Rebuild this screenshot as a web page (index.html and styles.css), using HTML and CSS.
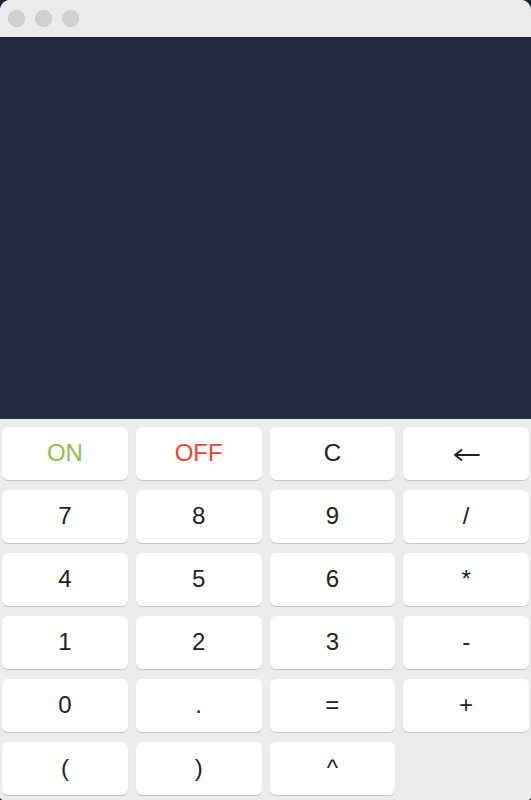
FILE: index.html
```html
<!DOCTYPE html>
<html>
<head>
<meta charset="utf-8">
<link rel="stylesheet" href="styles.css">
</head>
<body>
<div class="window">
  <div class="titlebar">
    <span class="light"></span>
    <span class="light"></span>
    <span class="light"></span>
  </div>
  <div class="display"></div>
  <div class="keypad">
    <button class="key on">ON</button>
    <button class="key off">OFF</button>
    <button class="key">C</button>
    <button class="key" aria-label="←"><svg class="arrow" width="27" height="14" viewBox="0 0 27 14"><path d="M2 7 H26 M2 7 L8.5 2 M2 7 L8.5 12" fill="none" stroke="#222" stroke-width="1.8" stroke-linecap="round" stroke-linejoin="round"/></svg></button>
    <button class="key">7</button>
    <button class="key">8</button>
    <button class="key">9</button>
    <button class="key">/</button>
    <button class="key">4</button>
    <button class="key">5</button>
    <button class="key">6</button>
    <button class="key">*</button>
    <button class="key">1</button>
    <button class="key">2</button>
    <button class="key">3</button>
    <button class="key">-</button>
    <button class="key">0</button>
    <button class="key">.</button>
    <button class="key">=</button>
    <button class="key">+</button>
    <button class="key">(</button>
    <button class="key">)</button>
    <button class="key">^</button>
  </div>
</div>
</body>
</html>
```
FILE: styles.css
```css
html, body {
  margin: 0;
  padding: 0;
  background: #1d2130;
}
.window {
  width: 531px;
  height: 800px;
  display: flex;
  flex-direction: column;
  background: #ececec;
  font-family: "Liberation Sans", Arial, sans-serif;
  border-radius: 10px 10px 4px 4px;
  overflow: hidden;
}
.titlebar {
  flex: none;
  display: flex;
  align-items: center;
  gap: 10px;
  padding-left: 8px;
  background: #ebebeb;
  border-bottom: 1px solid #1b2030;
  box-sizing: border-box;
  height: 38px;
}
.light {
  width: 17px;
  height: 17px;
  border-radius: 50%;
  background: #d0d0d0;
  border: 1px solid #c6c6c6;
  box-sizing: border-box;
}
.display {
  height: 381px;
  flex: none;
  background: #232a3f;
}
.keypad {
  flex: 1;
  display: grid;
  grid-template-columns: repeat(4, 1fr);
  grid-auto-rows: 53px;
  gap: 10px 8px;
  padding: 8px 2px 5px 2px;
  background: #ececec;
}
.key {
  margin: 0;
  border: none;
  border-radius: 6px;
  background: #ffffff;
  box-shadow: 0 1px 1px rgba(0,0,0,0.18);
  font-family: "Liberation Sans", Arial, sans-serif;
  font-size: 24px;
  line-height: 1;
  color: #222222;
  padding: 0 0 2px 0;
}
.key.on { color: #8bc34a; }
.key.off { color: #f44336; }
.arrow {
  display: inline-block;
  vertical-align: middle;
  margin-top: 2px;
}
```
